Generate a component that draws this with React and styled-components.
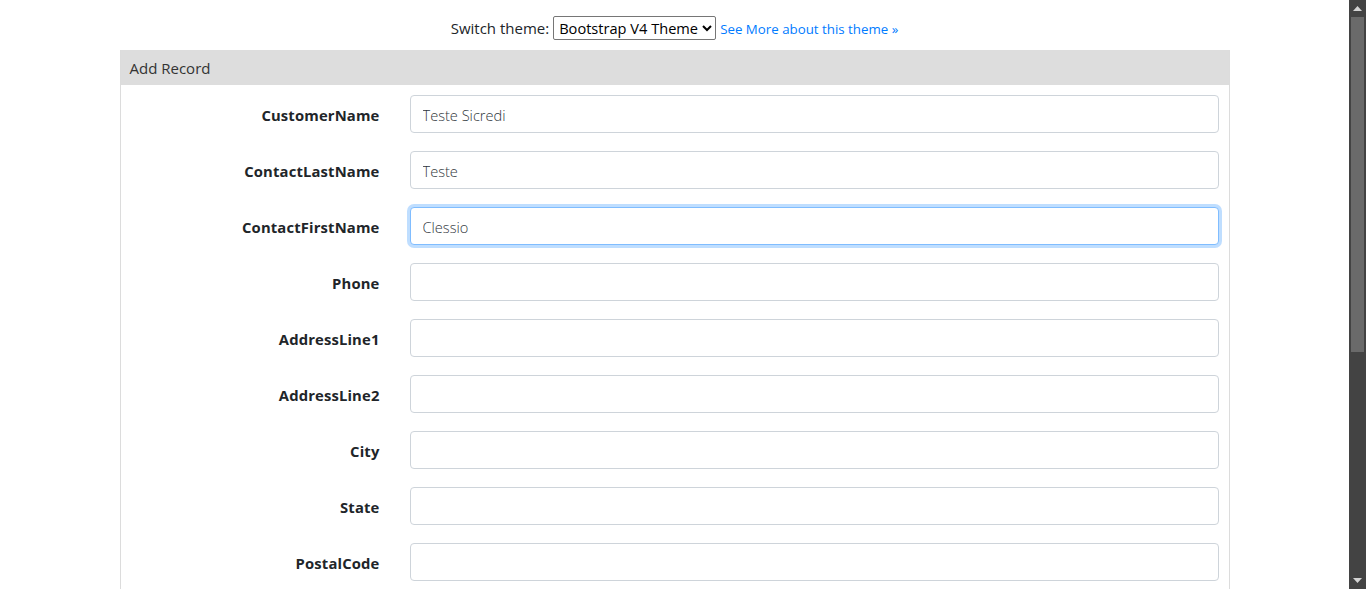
import React from "react";
import styled, { createGlobalStyle } from "styled-components";

const Global = createGlobalStyle`
  html, body {
    margin: 0;
    background: #ffffff;
    overflow: hidden;
  }
  body {
    font-family: "Open Sans", "Noto Sans", sans-serif;
    color: #212529;
  }
  * { box-sizing: border-box; }
`;

const Window = styled.div`
  display: flex;
  height: 100vh;
  width: 100vw;
`;

const Viewport = styled.main`
  flex: 1;
  overflow: hidden;
`;

const ScrollTrack = styled.div`
  width: 17px;
  flex: none;
  background: #434343;
  display: flex;
  flex-direction: column;
  align-items: center;
`;

const ScrollButton = styled.div`
  height: 17px;
  width: 17px;
  display: flex;
  align-items: center;
  justify-content: center;
`;

const ScrollThumb = styled.div`
  width: 13px;
  height: 335px;
  background: #6a6a6a;
`;

const ScrollRest = styled.div`
  flex: 1;
`;

const Page = styled.div`
  width: 1110px;
  margin: 0 auto;
  padding-bottom: 40px;
`;

const ThemeBar = styled.div`
  display: flex;
  justify-content: center;
  align-items: center;
  gap: 4px;
  height: 50px;
  padding-top: 6px;
  font-size: 15px;
  color: #212529;
`;

const ThemeSelect = styled.select`
  font-family: inherit;
  font-size: 14.6px;
  height: 24px;
  color: #000;
  background: #fff;
  border: 1px solid #767676;
  border-radius: 2px;
  padding: 0 1px;
`;

const MoreLink = styled.a`
  color: #007bff;
  font-size: 13.3px;
  text-decoration: none;
  margin-top: 2px;
`;

const Panel = styled.section`
  border: 1px solid #dcdcdc;
  border-top: none;
`;

const PanelHeader = styled.div`
  background: #dddddd;
  height: 35px;
  display: flex;
  align-items: center;
  padding-left: 9px;
  font-size: 15px;
  font-weight: 400;
  color: #333;
`;

const PanelBody = styled.div`
  padding: 10px 10px 20px 10px;
  display: flex;
  flex-direction: column;
  gap: 18px;
`;

const Row = styled.div`
  display: grid;
  grid-template-columns: 249px 1fr;
  column-gap: 30px;
  align-items: center;
`;

const Label = styled.label`
  text-align: right;
  font-weight: 700;
  font-size: 14.8px;
  color: #212529;
  letter-spacing: 0.15px;
  padding-top: 2px;
`;

const Field = styled.input`
  height: 38px;
  width: 100%;
  padding: 2px 12px 0;
  font-family: inherit;
  font-size: 14.6px;
  font-weight: 300;
  color: #2f353b;
  background: #fff;
  border: 1px solid ${(p) => (p.$focused ? "#80bdff" : "#ced4da")};
  border-radius: 4px;
  outline: none;
  box-shadow: ${(p) => (p.$focused ? "0 0 0 3px rgba(0,123,255,0.25)" : "none")};
  &:focus {
    border-color: #80bdff;
    box-shadow: 0 0 0 3px rgba(0, 123, 255, 0.25);
  }
`;

const Actions = styled.div`
  display: flex;
  gap: 8px;
  padding-left: 279px;
`;

const Button = styled.button`
  font-family: inherit;
  font-size: 15px;
  padding: 6px 14px;
  border-radius: 4px;
  border: 1px solid ${(p) => (p.$primary ? "#007bff" : "#6c757d")};
  background: ${(p) => (p.$primary ? "#007bff" : "#6c757d")};
  color: #fff;
`;

const Arrow = ({ up }) => (
  <svg width="9" height="5" viewBox="0 0 9 5">
    <polygon
      points={up ? "0,5 4.5,0 9,5" : "0,0 4.5,5 9,0"}
      fill="#d4d4d4"
    />
  </svg>
);

const fields = [
  ["CustomerName", "Teste Sicredi"],
  ["ContactLastName", "Teste"],
  ["ContactFirstName", "Clessio", true],
  ["Phone", ""],
  ["AddressLine1", ""],
  ["AddressLine2", ""],
  ["City", ""],
  ["State", ""],
  ["PostalCode", ""],
  ["Country", ""],
  ["SalesRepEmployeeNumber", ""],
  ["CreditLimit", ""],
];

export default function App() {
  return (
    <>
      <Global />
      <Window>
        <Viewport>
          <Page>
            <ThemeBar>
              <span>Switch theme:</span>
              <ThemeSelect defaultValue="bs4">
                <option value="bs4">Bootstrap V4 Theme</option>
                <option value="bs3">Bootstrap V3 Theme</option>
                <option value="flat">Flat UI</option>
              </ThemeSelect>
              <MoreLink href="#">See More about this theme »</MoreLink>
            </ThemeBar>
            <Panel>
              <PanelHeader>Add Record</PanelHeader>
              <PanelBody>
                {fields.map(([name, value, focused]) => (
                  <Row key={name}>
                    <Label htmlFor={name}>{name}</Label>
                    <Field
                      id={name}
                      defaultValue={value}
                      $focused={focused}
                      autoFocus={focused}
                    />
                  </Row>
                ))}
                <Actions>
                  <Button $primary>Save</Button>
                  <Button>Cancel</Button>
                </Actions>
              </PanelBody>
            </Panel>
          </Page>
        </Viewport>
        <ScrollTrack>
          <ScrollButton>
            <Arrow up />
          </ScrollButton>
          <ScrollThumb />
          <ScrollRest />
          <ScrollButton>
            <Arrow />
          </ScrollButton>
        </ScrollTrack>
      </Window>
    </>
  );
}
